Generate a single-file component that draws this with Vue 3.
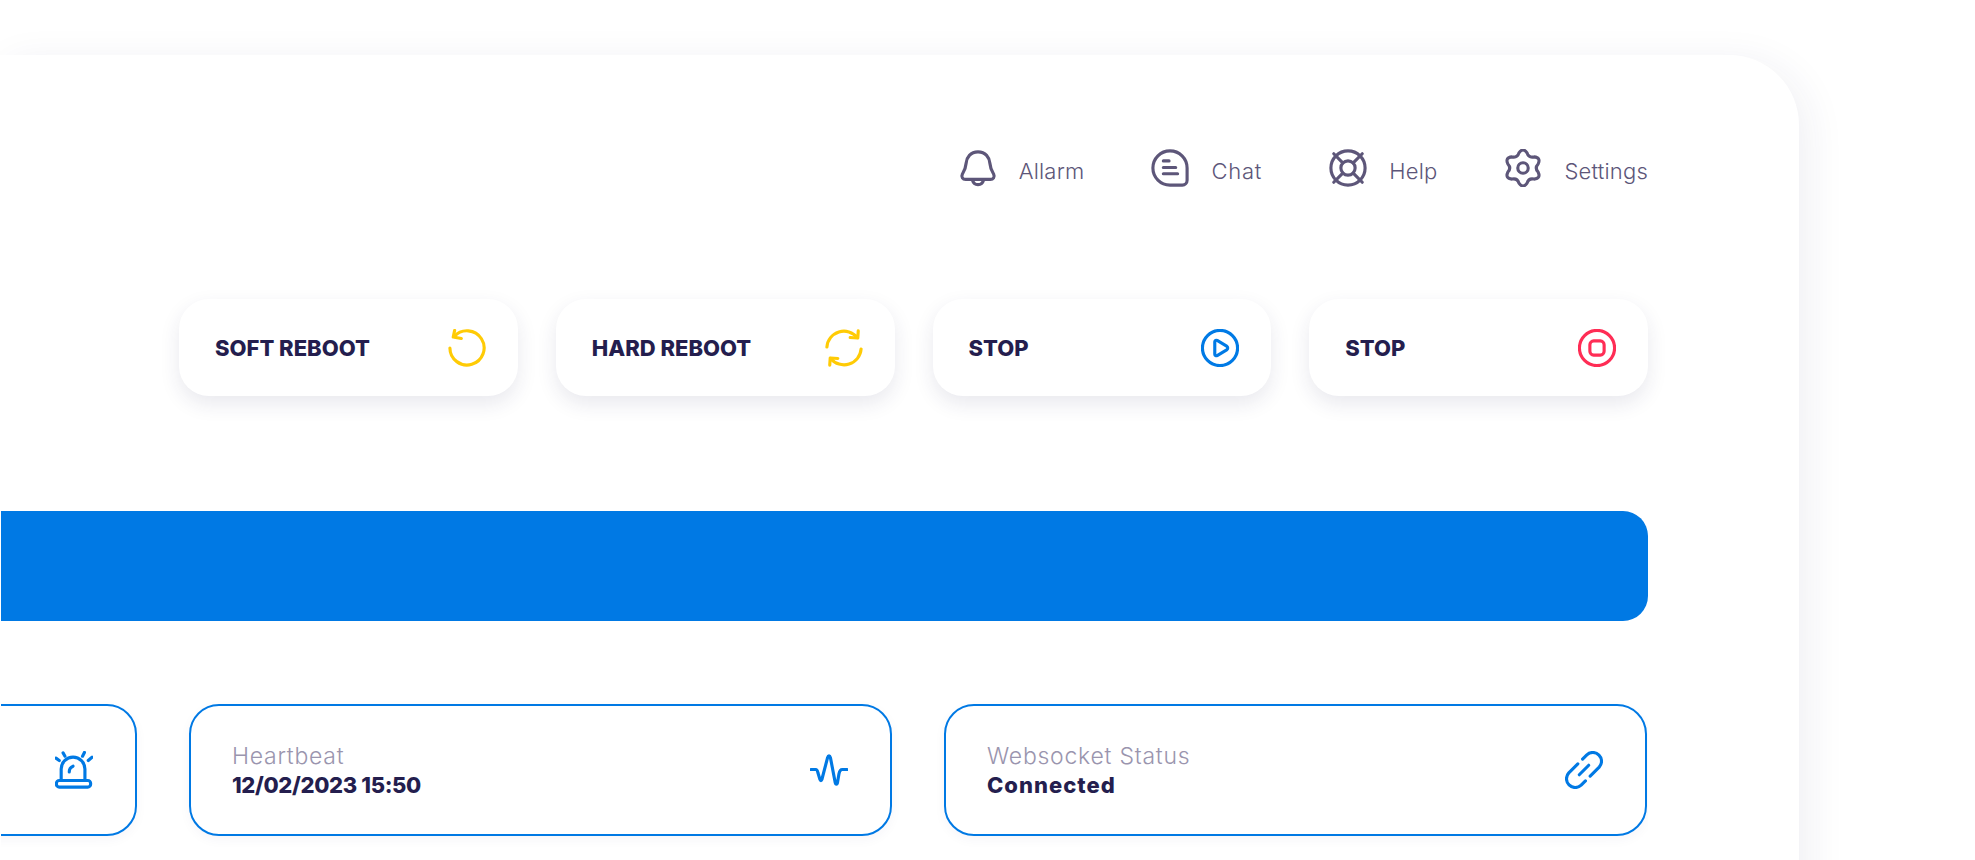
<script setup>
const navItems = [
  { id: 'bell', label: 'Allarm' },
  { id: 'chat', label: 'Chat' },
  { id: 'help', label: 'Help' },
  { id: 'gear', label: 'Settings' }
]
const actions = [
  { id: 'undo', label: 'SOFT REBOOT', cls: 'yellow' },
  { id: 'sync', label: 'HARD REBOOT', cls: 'yellow' },
  { id: 'play', label: 'STOP', cls: 'blue' },
  { id: 'stop', label: 'STOP', cls: 'red' }
]
const stats = [
  { id: 'siren' },
  { id: 'pulse', label: 'Heartbeat', value: '12/02/2023 15:50', cls: 'tight' },
  { id: 'link', label: 'Websocket Status', value: 'Connected', cls: 'wide' }
]
const p = (r, t) => `${(20 + r * Math.cos(t)).toFixed(2)} ${(20 + r * Math.sin(t)).toFixed(2)}`
let gearPath = ''
for (let i = 0; i < 6; i++) {
  const a = (-90 + 60 * i) * Math.PI / 180
  const off = 15 * Math.PI / 180
  const val = 30 * Math.PI / 180
  if (i === 0) gearPath += `M${p(16.5, a - off)} `
  gearPath += `Q${p(22, a)} ${p(16.5, a + off)} Q${p(12, a + val)} ${p(16.5, a + 2 * val - off)} `
}
gearPath += 'Z'
</script>

<template>
  <div class="page">
    <section class="panel">
      <nav class="topnav">
        <a v-for="n in navItems" :key="n.id" class="navitem">
          <svg class="navicon" viewBox="0 0 40 40">
            <template v-if="n.id === 'bell'">
              <path d="M20 3C12 3 8 9 7.500 15C7 21 5 24 3.500 26.500C2 29.500 4 32 7 32H33C36 32 38 29.500 36.500 26.500C35 24 33 21 32.500 15C32 9 28 3 20 3Z" />
              <path d="M14 32.500C15 36 17.500 37.500 20 37.500S25 36 26 32.500" />
            </template>
            <template v-else-if="n.id === 'chat'">
              <path d="M20 2A18 18 0 0 0 20 38H33A5 5 0 0 0 38 33V20A18 18 0 0 0 20 2Z" />
              <path d="M13 12.500H19M13 19.500H26M13 26H28" />
            </template>
            <template v-else-if="n.id === 'help'">
              <circle cx="20" cy="20" r="18" />
              <circle cx="20" cy="20" r="7.500" />
              <path d="M5 5L14.500 14.500M35 5L25.500 14.500M5 35L14.500 25.500M35 35L25.500 25.500" />
            </template>
            <template v-else>
              <path :d="gearPath" />
              <circle cx="20" cy="20" r="5.500" />
            </template>
          </svg>
          <span class="navlabel">{{ n.label }}</span>
        </a>
      </nav>

      <div class="actions">
        <button v-for="a in actions" :key="a.id" class="action" :class="a.cls" type="button">
          <span>{{ a.label }}</span>
          <svg class="acticon" viewBox="0 0 40 40">
            <template v-if="a.id === 'undo'">
              <path d="M6.500 8A18 18 0 1 1 2 20" />
              <path d="M7 1.500L5.500 8.500L14 10" />
            </template>
            <template v-else-if="a.id === 'sync'">
              <path d="M2 19A18 18 0 0 1 34 9" />
              <path d="M35 2L34.500 9.500L26.500 9" />
              <path d="M38 21A18 18 0 0 1 6 31" />
              <path d="M5 38L5.500 30.500L13.500 31" />
            </template>
            <template v-else-if="a.id === 'play'">
              <circle cx="20" cy="20" r="18.500" />
              <path d="M14.500 13.500C14.500 12 16 11.500 17 12L27 18C28.500 19 28.500 21 27 22L17 28C16 28.500 14.500 28 14.500 26.500Z" />
            </template>
            <template v-else>
              <circle cx="20" cy="20" r="18.500" />
              <rect x="12.500" y="12.500" width="15" height="15" rx="4" />
            </template>
          </svg>
        </button>
      </div>

      <div class="banner"></div>

      <div class="stats">
        <div v-for="s in stats" :key="s.id" class="stat" :class="s.cls">
          <div class="stattext">
            <template v-if="s.label">
              <div class="statlabel">{{ s.label }}</div>
              <div class="statvalue">{{ s.value }}</div>
            </template>
          </div>
          <svg class="staticon" viewBox="0 0 40 40">
            <template v-if="s.id === 'siren'">
              <path d="M6.500 31V19A12.500 12.500 0 0 1 31.500 19V31" />
              <rect x="1.500" y="31" width="36" height="7" rx="3" />
              <path d="M15 22C15 19 16.500 17 19 16" />
              <path d="M1 7.500L4.500 10M8.500 2L10.500 5.500M29 5.500L31 1.500M35 10L39 6.500" />
            </template>
            <template v-else-if="s.id === 'pulse'">
              <path d="M1 19.500H6C7.500 19.500 8 21 8.500 23.500L10.500 30C11 31.500 12 31.500 12.500 30L18.500 7C19.200 4.500 20.800 4.500 21.500 7L26.500 33C27 35.500 28.500 35.500 29 33L30.500 24C31 21 32 19.500 34 19.500H39" />
            </template>
            <template v-else>
              <path d="M18.500 8.500L23 4A9.200 9.200 0 0 1 36 17L26.500 26.500" />
              <path d="M21.500 31.500L17 36A9.200 9.200 0 0 1 4 23L13.500 13.500" />
              <path d="M15 25L25 15" />
            </template>
          </svg>
        </div>
      </div>
    </section>
  </div>
</template>

<style>
html, body { margin: 0; background: #fff; overflow: hidden; }
</style>

<style scoped>
.page {
  width: 1975px;
  height: 860px;
  overflow: hidden;
  padding-top: 55px;
  box-sizing: border-box;
  background: #fff;
  font-family: Inter, "Liberation Sans", sans-serif;
}
.panel {
  width: 1799px;
  height: 900px;
  box-sizing: border-box;
  padding: 0 151px 0 0;
  background: #fff;
  border-radius: 0 70px 0 0;
  box-shadow: 8px 8px 40px rgba(40, 35, 90, 0.075);
}
.topnav {
  display: flex;
  justify-content: flex-end;
  gap: 67px;
  padding-top: 93px;
  height: 152px;
  box-sizing: border-box;
}
.navitem {
  display: flex;
  align-items: center;
  gap: 22px;
  height: 40px;
  color: #5d5679;
  font-size: 22px;
  font-weight: 300;
  letter-spacing: 0.2px;
}
.navitem:nth-child(2) { letter-spacing: 0.8px; }
.navlabel { padding-top: 5px; }
.navicon { width: 38px; height: 38px; fill: none; stroke: #5d5679; stroke-width: 3.3; stroke-linecap: round; stroke-linejoin: round; }
.actions {
  display: flex;
  justify-content: flex-end;
  gap: 38px;
  margin-top: 92px;
}
.action {
  flex: 0 0 338.75px;
  height: 97px;
  box-sizing: border-box;
  padding: 0 32px 0 36px;
  display: flex;
  align-items: center;
  justify-content: space-between;
  background: #fff;
  border: 0;
  border-radius: 30px;
  box-shadow: 0 8px 20px rgba(40, 35, 90, 0.1);
  color: #241e4e;
  font-family: inherit;
  font-size: 22px;
  font-weight: 800;
}
.acticon { width: 38px; height: 38px; fill: none; stroke-width: 3.3; stroke-linecap: round; stroke-linejoin: round; }
.yellow .acticon { stroke: #ffcb05; }
.blue .acticon { stroke: #007ae5; }
.red .acticon { stroke: #ff2d55; }
.banner {
  height: 110px;
  margin: 115px 0 0 1px;
  background: #0079e4;
  border-radius: 0 25px 25px 0;
}
.stats {
  display: flex;
  justify-content: flex-end;
  gap: 52px;
  margin: 60px 0 0 1px;
  padding: 23px 1px 24px 0;
  overflow: hidden;
}
.stat {
  flex: 0 0 703px;
  height: 132px;
  box-sizing: border-box;
  padding: 0 42px 0 41px;
  display: flex;
  align-items: center;
  justify-content: space-between;
  background: #fff;
  border: 2px solid #0079e4;
  border-radius: 30px;
  box-shadow: 0 4px 12px rgba(40, 35, 90, 0.04);
}
.statlabel { color: #9a95ae; font-size: 23px; font-weight: 300; line-height: 28px; letter-spacing: 0.75px; }
.statvalue { color: #241e4e; font-size: 22px; font-weight: 800; line-height: 28px; margin-top: 1px; }
.tight .statvalue { letter-spacing: -0.35px; }
.wide .statvalue { letter-spacing: 1px; }
.staticon { width: 38px; height: 38px; fill: none; stroke: #0079e4; stroke-width: 3.3; stroke-linecap: round; stroke-linejoin: round; }
</style>
